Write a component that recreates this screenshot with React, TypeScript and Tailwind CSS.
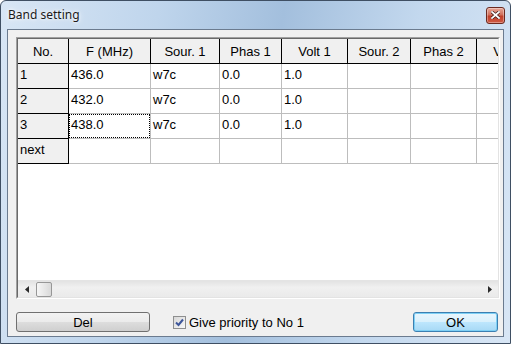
const colW = [
  "w-[51px]",
  "w-[82px]",
  "w-[69px]",
  "w-[62px]",
  "w-[66px]",
  "w-[63px]",
  "w-[66px]",
  "w-[66px]",
];

const header = ["No.", "F (MHz)", "Sour. 1", "Phas 1", "Volt 1", "Sour. 2", "Phas 2", "Volt 2"];

const rows = [
  ["1", "436.0", "w7c", "0.0", "1.0", "", "", ""],
  ["2", "432.0", "w7c", "0.0", "1.0", "", "", ""],
  ["3", "438.0", "w7c", "0.0", "1.0", "", "", ""],
  ["next", "", "", "", "", "", "", ""],
];

function HeaderRow() {
  return (
    <div className="flex h-[25px] shrink-0">
      {header.map((h, i) => (
        <div
          key={i}
          className={`${colW[i]} flex h-full shrink-0 items-center justify-center border-r border-b border-black bg-[#f0f0f0] leading-[15px]`}
        >
          {h}
        </div>
      ))}
    </div>
  );
}

function DataRow({ cells, rowIdx }: { cells: string[]; rowIdx: number }) {
  return (
    <div className="flex h-[25px] shrink-0">
      {cells.map((c, i) => {
        const fixed = i === 0;
        const focused = rowIdx === 2 && i === 1;
        return (
          <div
            key={i}
            className={`${colW[i]} h-full shrink-0 border-r border-b leading-[15px] ${
              fixed ? "border-black bg-[#f0f0f0]" : "border-[#bdbdbd] bg-white"
            }`}
          >
            {focused ? (
              <div className="h-full w-full border border-dotted border-black pt-[2px] pl-[1px]">{c}</div>
            ) : (
              <div className="h-full w-full pt-[3px] pl-[2px]">{c}</div>
            )}
          </div>
        );
      })}
    </div>
  );
}

function ScrollBar() {
  return (
    <div className="flex h-[17px] shrink-0 items-center border-t border-[#e4e4e4] bg-[linear-gradient(to_bottom,#e3e3e3,#f0f0f0_40%,#eaeaea)]">
      <div className="flex h-full w-[17px] shrink-0 items-center justify-center">
        <svg width="4" height="7" viewBox="0 0 4 7">
          <path d="M4 0 L0 3.5 L4 7 Z" fill="#2a2a2a" />
        </svg>
      </div>
      <div className="ml-[1px] h-[15px] w-[16px] rounded-[2px] border border-[#979797] bg-[linear-gradient(to_right,#f6f6f6,#e8e8e8_50%,#d9d9d9)]" />
      <div className="flex-1" />
      <div className="flex h-full w-[17px] shrink-0 items-center justify-center">
        <svg width="4" height="7" viewBox="0 0 4 7">
          <path d="M0 0 L4 3.5 L0 7 Z" fill="#2a2a2a" />
        </svg>
      </div>
    </div>
  );
}

function Grid() {
  return (
    <div className="h-[262px] w-[484px] border border-t-[#a0a0a0] border-l-[#a0a0a0] border-r-white border-b-white">
      <div className="flex h-full w-full flex-col border border-t-[#696969] border-l-[#696969] border-r-[#e3e3e3] border-b-[#e3e3e3] bg-white">
        <div className="flex-1 overflow-hidden text-[13px] text-black">
          <div className="w-[560px]">
            <HeaderRow />
            {rows.map((r, i) => (
              <DataRow key={i} cells={r} rowIdx={i} />
            ))}
          </div>
        </div>
        <ScrollBar />
      </div>
    </div>
  );
}

function CheckBox() {
  return (
    <div className="flex h-[13px] w-[13px] items-center justify-center border border-[#8e8f8f] bg-[linear-gradient(to_bottom_right,#d8d8d8,#f8f8f8)]">
      <svg width="9" height="9" viewBox="0 0 9 9">
        <path d="M1 4.5 L3.5 7 L8 1.5" fill="none" stroke="#3d569a" strokeWidth="2" />
      </svg>
    </div>
  );
}

export default function App() {
  return (
    <div className="h-[344px] w-[511px] overflow-hidden rounded-t-[6px] border border-[#3f4f63] bg-[linear-gradient(100deg,#d8e6f5_0%,#bfd5ec_28%,#a3bfdd_50%,#c3d8ee_74%,#d8e6f5_100%)] font-['Liberation_Sans',Arial,sans-serif] text-black select-none">
      <div className="flex h-[28px] items-center pr-[5px] pl-[7px]">
        <span className="font-['Noto_Sans','Open_Sans',sans-serif] text-[12px] text-[#1b1b1b] [text-shadow:0_0_6px_#fff,0_0_3px_#fff]">
          Band setting
        </span>
        <div className="ml-auto flex h-[17px] w-[19px] items-center justify-center rounded-[3px] border border-[#6b2a20] bg-[linear-gradient(to_bottom,#e8a898,#d0705c_45%,#c0402a_55%,#d05a44)] shadow-[inset_0_0_0_1px_rgba(255,255,255,0.35)]">
          <svg width="9" height="8" viewBox="0 0 9 8">
            <path d="M1 1 L8 7 M8 1 L1 7" stroke="#3a1a14" strokeWidth="3.2" strokeLinecap="square" />
            <path d="M1 1 L8 7 M8 1 L1 7" stroke="#ffffff" strokeWidth="1.8" strokeLinecap="square" />
          </svg>
        </div>
      </div>
      <div className="mx-[6px] h-[308px] border border-[#6b7b8f] bg-[#f0f0f0]">
        <div className="flex h-full flex-col pt-[7px] pr-[3px] pl-[8px]">
          <Grid />
          <div className="mt-[13px] flex h-[20px] items-center text-[13px]">
            <button className="flex h-[20px] w-[134px] items-center justify-center rounded-[3px] border border-[#707070] bg-[linear-gradient(to_bottom,#f2f2f2,#ebebeb_50%,#dddddd_50%,#cfcfcf)] leading-none">
              Del
            </button>
            <div className="ml-[23px] flex items-center gap-[3px]">
              <CheckBox />
              <span className="leading-[15px]">Give priority to No 1</span>
            </div>
            <button className="mr-[2px] ml-auto flex h-[20px] w-[85px] items-center justify-center rounded-[3px] border border-[#3c7fb1] bg-[linear-gradient(to_bottom,#eaf6fd,#d9f0fc_50%,#bee6fd_50%,#a7d9f5)] leading-none shadow-[inset_0_0_0_1px_#7ed0f5]">
              OK
            </button>
          </div>
        </div>
      </div>
    </div>
  );
}
